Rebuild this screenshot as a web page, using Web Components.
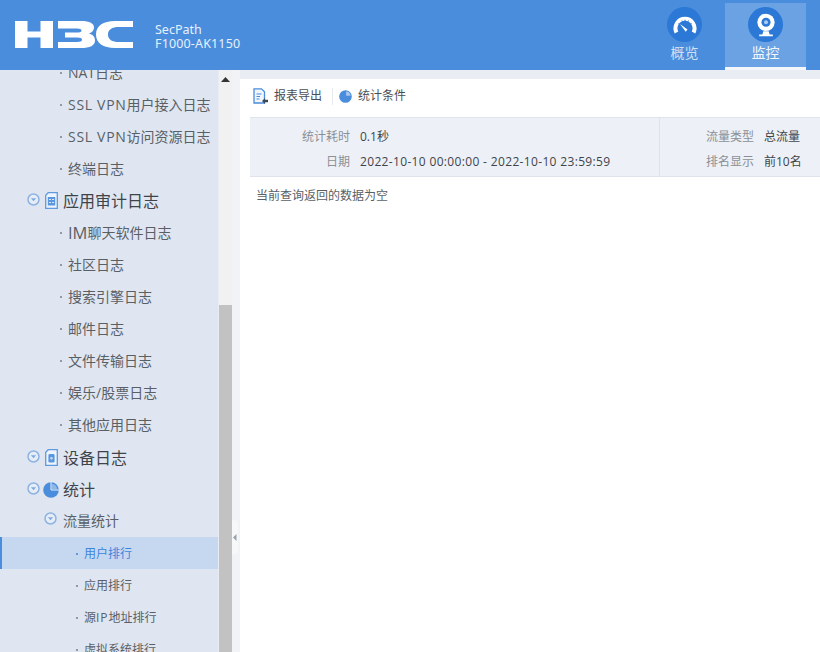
<!DOCTYPE html>
<html lang="zh"><head><meta charset="utf-8"><title>H3C</title>
<style>
html,body{margin:0;height:100%;overflow:hidden;background:#e9edf3;font-family:"Open Sans","Noto Sans CJK SC",sans-serif;color:#555}
</style></head><body>
<app-shell></app-shell>

<script>
function def(name, css, html){
  customElements.define(name, class extends HTMLElement{
    constructor(){super();const r=this.attachShadow({mode:'open'});r.innerHTML='<style>'+css+'</style>'+(typeof html==='function'?html(this):html);}
  });
}
const arrow=`<svg width="13" height="13" viewBox="0 0 13 13"><circle cx="6.5" cy="6.5" r="5.5" fill="#e6edf7" stroke="#8db3e2" stroke-width="1.5"/><path d="M3.900 5.300l2.600 2.900 2.600-2.900z" fill="#7fa9de"/></svg>`;
const icons={
 doc:`<svg width="13" height="17" viewBox="0 0 13 17"><path d="M3.200.7h9.100v15.600H.7V3.200z" fill="#eef4fb" stroke="#5f9ae0" stroke-width="1.300"/><path d="M2.800 5h7.400v8.500H2.800z" fill="#5a97df"/><path d="M4 7.500h2M7 7.500h2M4 10.500h2M7 10.500h2" stroke="#dbe8f7"/></svg>`,
 dev:`<svg width="13" height="17" viewBox="0 0 13 17"><path d="M3.200.7h9.100v15.600H.7V3.200z" fill="#eef4fb" stroke="#5f9ae0" stroke-width="1.300"/><rect x="3.400" y="5" width="6.200" height="8.600" rx="1.400" fill="#5a97df"/><circle cx="6.500" cy="9.300" r="1.300" fill="#c5dbf4"/></svg>`,
 pie:`<svg width="16" height="16" viewBox="0 0 16 16"><circle cx="8" cy="8" r="7.800" fill="#4a8ddc"/><path d="M8.700 1.800a5.800 5.800 0 0 1 5.500 5.500H8.700z" fill="#8fb8e9"/><path d="M8 0v8h8" fill="none" stroke="#e8eef7" stroke-width="1"/></svg>`
};

def('nav-item',`:host{display:flex;align-items:center;height:32px;flex:none;box-sizing:border-box;padding:var(--pt,0) 0 0 var(--pad,60px);font-size:var(--fs,14px);line-height:18px;color:#5a5f66;white-space:nowrap}
.d{width:2px;height:2px;border-radius:50%;background:#7b8087;margin-right:6px;flex:none}
:host([active]){background:#c5d8f0;color:#3d84dc;box-shadow:inset 2px 0 0 #4a8ddc}
:host([active]) .d{background:#3d84dc}`,`<span class="d"></span><slot></slot>`);

def('nav-group',`:host{display:flex;align-items:center;height:32px;flex:none;box-sizing:border-box;font-size:16px;line-height:20px;padding-left:27px;color:#3f444a;white-space:nowrap}
:host([icon=dev]),:host([icon=pie]){padding-top:2px}
.a{display:flex;width:13px;margin-top:-4px;flex:none}
.i{display:flex;width:18px;margin:-1px 0 0 5px;flex:none}
:host([icon=pie]) .i{margin-left:3px;width:20px}`,
 el=>`<span class="a">${arrow}</span><span class="i">${icons[el.getAttribute('icon')]}</span><slot></slot>`);

def('nav-sub',`:host{display:flex;align-items:center;height:32px;flex:none;box-sizing:border-box;padding-left:44px;font-size:14px;line-height:18px;color:#5a5f66;white-space:nowrap}
.a{display:flex;width:19px;margin-top:-5px;flex:none}`,`<span class="a">${arrow}</span><slot></slot>`);

def('side-scroll',`:host{display:flex;flex-direction:column;width:13px;flex:none;background:#f1f1f1}
.up{height:18px;display:flex;justify-content:center;align-items:center}
.t{height:217px}.th{flex:1;background:#c2c2c2}
svg{display:block}`,`<div class="up"><svg width="9" height="5"><path d="M4.500 0L9 5H0z" fill="#333"/></svg></div><div class="t"></div><div class="th"></div>`);

def('side-bar',`:host{display:flex;width:232px;flex:none;min-height:0;overflow:hidden}
.list{width:218px;flex:none;background:#dfe6f1;display:flex;flex-direction:column;overflow:hidden;margin-right:1px}
.in{display:flex;flex-direction:column;margin-top:-13px}
.third{--pad:76px;--fs:12px;--pt:1px}
.v{letter-spacing:.7px}.m{font-size:16.500px;line-height:18px}.p{letter-spacing:1px}`,`<div class="list"><div class="in">
<nav-item>NAT日志</nav-item><nav-item><span class="v">SSL VPN</span>用户接入日志</nav-item><nav-item><span class="v">SSL VPN</span>访问资源日志</nav-item><nav-item>终端日志</nav-item>
<nav-group icon="doc">应用审计日志</nav-group>
<nav-item><span class="m">IM</span>聊天软件日志</nav-item><nav-item>社区日志</nav-item><nav-item>搜索引擎日志</nav-item><nav-item>邮件日志</nav-item><nav-item>文件传输日志</nav-item><nav-item>娱乐/股票日志</nav-item><nav-item>其他应用日志</nav-item>
<nav-group icon="dev">设备日志</nav-group><nav-group icon="pie">统计</nav-group>
<nav-sub>流量统计</nav-sub>
<nav-item class="third" active>用户排行</nav-item><nav-item class="third">应用排行</nav-item><nav-item class="third">源<span class="p">IP</span>地址排行</nav-item><nav-item class="third">虚拟系统排行</nav-item>
</div></div><side-scroll></side-scroll>`);

def('top-tab',`:host{display:flex;flex-direction:column;align-items:center;width:81px;height:67px;box-sizing:border-box;padding-top:4px;color:#cfe0f5;font-size:14px;line-height:18px;border-bottom:3px solid transparent}
:host([active]){background:#6aa2e3;color:#f2f7fd;border-bottom-color:#f2f5fa}
.c{width:35px;height:35px;border-radius:50%;background:#2b78d6;display:flex;align-items:center;justify-content:center;margin-bottom:2px}
svg{display:block}`,`<span class="c"><slot name="i"></slot></span><slot></slot>`);

def('top-bar',`:host{display:flex;align-items:flex-start;height:70px;flex:none;background:#4a8ddc;color:#fff}
.logo{margin:20px 22px 0 15px;flex:none;display:block}
.prod{margin-top:23px;font:12.5px/14px "Noto Sans","Open Sans",sans-serif;color:#e6f0fb}
.prod div{white-space:nowrap}
.prod div+div{letter-spacing:.15px}
.tabs{margin-left:auto;display:flex;margin-right:14px;padding-top:3px}`,
`<svg class="logo" width="118" height="29" viewBox="0 0 118 29" role="img" aria-label="H3C logo"><g fill="#fff">
<path d="M0 1h12.500v10.500h13V1H38v27H25.500V17.500h-13V28H0z"/>
<path d="M43 1h23c9 0 13 2.500 13 6.500 0 3-2 5-5 6 3.500 1 6 3 6 7 0 5-5 7.500-14 7.500H43v-6h19c3.500 0 5-.8 5-2.200 0-1.500-1.500-2.300-5-2.300H50v-5h12c3 0 4.500-.6 4.500-2 0-1.300-1.500-2-4.500-2H43z"/>
<path d="M118 1v6h-14c-7 0-11 2.500-11 7.500s4 7.500 11 7.500h14v6H100C88 28 81 23 81 14.500S88 1 100 1z"/></g></svg>
<div class="prod"><div>SecPath</div><div>F1000-AK1150</div></div>
<div class="tabs">
<top-tab><svg slot="i" width="24" height="18" viewBox="0 0 24 18"><path d="M3.500 16.500A9.500 9.500 0 1 1 20.500 16.500" fill="none" stroke="#fff" stroke-width="4"/><path d="M5.500 7.500l1.200 1M9 4.500l.5 1.300M12 3.800v1.400M15.500 4.500l-.6 1.300M18.500 7.500l-1.200 1" stroke="#2b78d6"/><path d="M7 8l7.500 5.500-1.800 2.200z" fill="#fff"/></svg>概览</top-tab>
<top-tab active><svg slot="i" width="20" height="24" viewBox="0 0 22 26"><circle cx="11" cy="10" r="9.500" fill="#fff"/><circle cx="11" cy="10" r="5" fill="#2b78d6"/><circle cx="11" cy="10" r="2.200" fill="#a9cbf2"/><path d="M8 20h6l1 3.500h3.500V25.500H3.500V23.500H7z" fill="#fff"/></svg>监控</top-tab>
</div>`);

def('tool-bar',`:host{display:flex;align-items:center;height:32px;flex:none;padding-left:13px;font-size:12px;line-height:16px;color:#4a4f55}
.b{display:flex;align-items:center;gap:6px;white-space:nowrap}
.s{width:1px;height:17px;background:#e6e9ee;margin:0 6px 0 10px}
svg{display:block}`,
`<span class="b"><svg width="15" height="16" viewBox="0 0 15 16"><path d="M1 .8h7.500l3 3V15H1z" fill="#f1f6fc" stroke="#4a8ddc" stroke-width="1.300"/><path d="M3.500 6h5M3.500 8.500h3.500M3.500 11h3" stroke="#4a8ddc"/><path d="M9 13l3-3v1.800h3v2.400h-3V16z" fill="#3a4a5e"/></svg>报表导出</span><span class="s"></span>
<span class="b"><svg width="13" height="13" viewBox="0 0 14 14"><circle cx="7" cy="7" r="6.800" fill="#4a8ddc"/><path d="M7.700 1.500a4.800 4.800 0 0 1 4.800 4.800H7.700z" fill="#a8c9ef"/></svg>统计条件</span>`);

def('stat-panel',`:host{display:grid;grid-template-columns:410px 1fr;height:60px;flex:none;margin-left:10px;background:#edf1f7;border:solid #dfe4ec;border-width:1px 0;box-sizing:border-box;font-size:12px;line-height:16px;color:#8b8f96;white-space:nowrap}
.c{display:grid;grid-auto-rows:25px;align-content:center;align-items:center;padding-top:5px}
.l{grid-template-columns:100px 1fr;column-gap:10px;border-right:1px solid #dfe4ec}
.l span:nth-child(odd){text-align:right}
.r{grid-template-columns:1fr 54px;column-gap:10px;padding-right:2px}
.r span:nth-child(odd){text-align:right}
b{font-weight:400;color:#3f444a}
.dt{letter-spacing:.34px}`,
`<div class="c l"><span>统计耗时</span><b>0.1秒</b><span>日期</span><b class="dt">2022-10-10 00:00:00 - 2022-10-10 23:59:59</b></div>
<div class="c r"><span>流量类型</span><b>总流量</b><span>排名显示</span><b>前10名</b></div>`);

def('main-pane',`:host{display:flex;flex-direction:column;flex:1;min-width:0;background:#fff;margin-top:9px;padding-top:1px}
stat-panel{margin-top:5px}
.e{margin:11px 0 0 16px;font-size:12px;line-height:16px;color:#5a5f66}`,
`<tool-bar></tool-bar><stat-panel></stat-panel><div class="e">当前查询返回的数据为空</div>`);

def('split-handle',`:host{display:flex;width:8px;flex:none;align-items:flex-start;background:#f1f3f7}
.h{width:6px;height:34px;margin-top:450px;border-radius:0 4px 4px 0;background:#f7f8fa;display:flex;align-items:center;justify-content:center}
svg{display:block}`,`<div class="h"><svg width="4" height="7"><path d="M3.500 0v7L0 3.500z" fill="#9aa2ad"/></svg></div>`);

def('app-shell',`:host{display:flex;flex-direction:column;height:100vh;overflow:hidden}
.b{display:flex;flex:1;min-height:0}`,`<top-bar></top-bar><div class="b"><side-bar></side-bar><split-handle></split-handle><main-pane></main-pane></div>`);
</script>
</body></html>
